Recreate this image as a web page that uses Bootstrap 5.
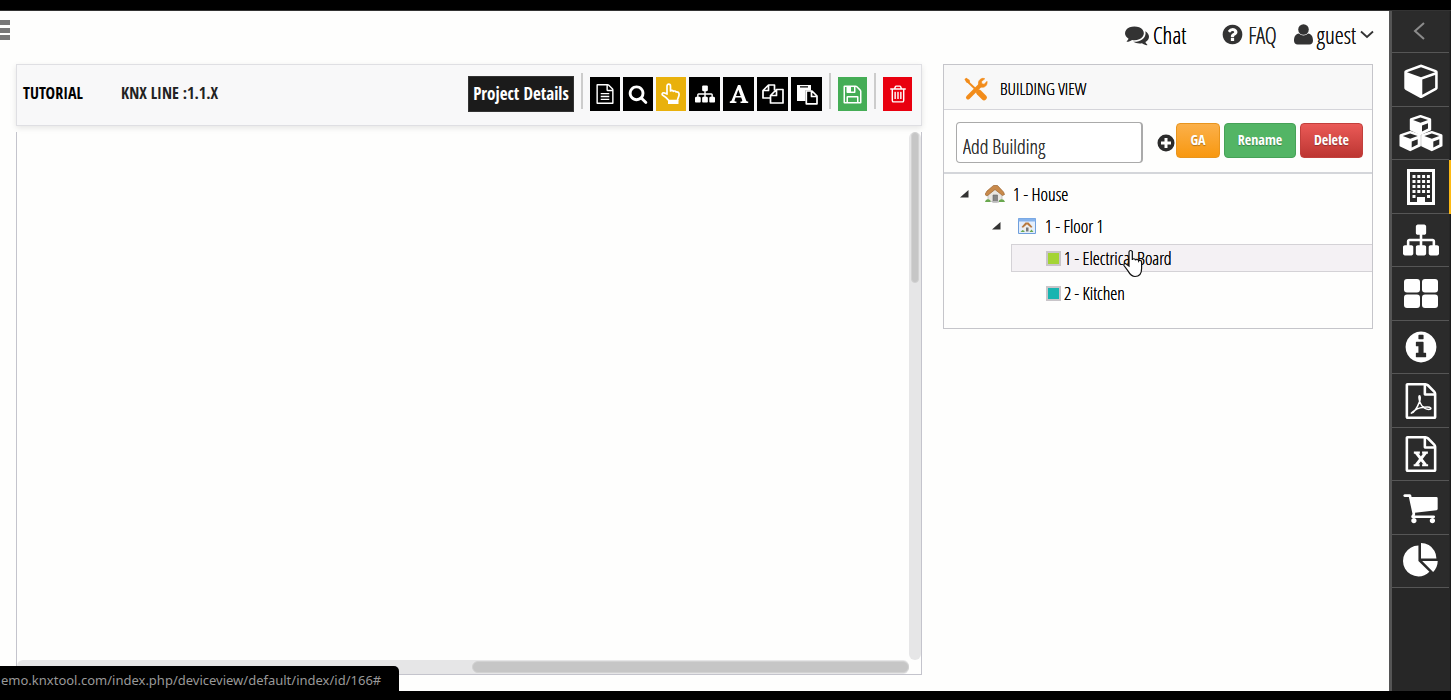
<!DOCTYPE html>
<html lang="en">
<head>
<meta charset="utf-8">
<meta name="viewport" content="width=device-width, initial-scale=1">
<title>KNX Tool - Building view</title>
<link href="https://cdn.jsdelivr.net/npm/bootstrap@5.3.0/dist/css/bootstrap.min.css" rel="stylesheet">
<style>
:root { --cond: "Open Sans Condensed", "Roboto Condensed", "Liberation Sans Narrow", "Liberation Sans", sans-serif; --cond-light: "Open Sans Condensed Light", "Roboto Condensed", "Liberation Sans", sans-serif; }
body { font-family: var(--cond); background: #fefefd; color: #222; font-size: 16px; line-height: 20px; }
svg { display: block; fill: currentColor; flex: none; }
.outline-icon { fill: none; }
a { color: inherit; text-decoration: none; }
.edge-top { height: 10px; background: #000; border-bottom: 1px solid #333; box-sizing: content-box; }
.edge-bottom { height: 9px; background: #000; }
.page-head, .side-title, .add-box, .node { font-family: var(--cond-light); text-shadow: 0 0 0 currentColor; }
.page-head { height: 53px; font-size: 23px; line-height: 28px; padding: 0 15px 6px 0; }
.burger { width: 11px; padding: 0; border: 0; background: none; color: #777; margin-bottom: 10px; }
.head-link { gap: 4px; }
.head-link svg { color: #333; }
.head-chat { margin-right: 35px; color: #000; }
.head-faq { margin-right: 17px; }
.head-btn { border: 0; background: none; padding: 0; color: #111; text-shadow: inherit; }
.work { padding: 0 16px 16px 16px; gap: 21px; }
.toolbar { height: 62px; background: #f8f8f9; border: 1px solid #dfdfe3; box-shadow: 0 2px 6px rgba(0,0,0,.1); padding: 0 9px 2px 6px; gap: 7px; margin-bottom: 6px; color: #000; }
.crumb { width: 91px; font-weight: 700; padding-bottom: 3px; }
.line-name { color: #222; }
.details-btn { height: 36px; width: 106px; background: #1b1b1b; color: #fff; border: 1px solid #333; font-weight: 700; font-size: 17px; padding: 0; white-space: nowrap; }
.sep { width: 2px; height: 36px; background: #ccc; margin-bottom: 6px; }
.tools { gap: 3px; }
.tool { height: 34px; width: 31px; padding: 0; border: 0; background: #000; color: #fff; display: flex; align-items: center; justify-content: center; }
.tool-slim { width: 30px; }
.tool-file { width: 29px; }
.tool-on { background: #e9b10c; }
.tool-save { background: #45ad56; }
.tool-del { background: #e9000f; }
.board { display: grid; grid-template: 1fr 14px / 1fr 12px; border: 1px solid #c4c4cc; border-top: 0; }
.rail { background: #e6e6e7; border-radius: 6px; }
.rail-y { padding: 0 2px; }
.rail-x { padding: 1px 0; }
.grip { background: #c6c6c6; border-radius: 6px; border: 1px solid #d2d2d2; }
.grip-y { height: 151px; }
.grip-x { height: 12px; width: 49%; }
.side-panel { flex: 0 0 430px; border: 1px solid #c5c5ca; align-self: flex-start; padding-bottom: 17px; }
.side-title { height: 45px; background: #f8f8f8; border-bottom: 1px solid #d5d5da; padding-left: 20px; padding-top: 4px; gap: 12px; font-size: 17px; color: #000; }
.side-form { height: 64px; padding: 3px 9px 0 12px; border-bottom: 2px solid #d4d6da; }
.add-box { width: 187px; height: 41px; border: 1px solid #aaa; border-right-width: 2px; border-radius: 4px; padding: 7px 6px 0; font-size: 20px; line-height: 26px; color: #333; background: #fff; }
.add-box::placeholder { color: #333; opacity: 1; }
.plus-btn { border: 0; background: none; padding: 0; color: #2b2b2b; margin-left: 14px; margin-right: 1px; margin-top: 1px; }
.act { height: 35px; padding: 0; border: 1px solid; border-radius: 4px; color: #fff; font-weight: 700; text-shadow: 0 1px 1px rgba(0,0,0,.3); margin-right: 4px; margin-bottom: 5px; font-size: 14px; }
.act-ga { width: 44px; background: linear-gradient(#fbb04a, #f89810); border-color: #e8951e; }
.act-ren { width: 72px; background: #53b565; border-color: #46a257; }
.act-del { width: 63px; background: linear-gradient(#ea5a57, #bd3632); border-color: #c2403c; margin-right: 0; }
.tree { list-style: none; margin: 0; padding: 0; }
.tree-top { padding-top: 6px; }
.node { height: 28px; margin-bottom: 4px; font-size: 18px; color: #000; }
.node-1 { padding-left: 16px; }
.node-2 { padding-left: 48px; }
.node-3 { margin-left: 67px; padding-left: 34px; border: 1px solid transparent; border-right: 0; }
.node-last { margin-top: 7px; }
.node-on { background: #f4f1f4; border-color: #d4d2d6; }
.swatch { width: 15px; height: 15px; border: 2px solid #c9c5c9; margin-right: 3px; }
.sw-lime { background: #a4d435; }
.sw-teal { background: #18b4b0; }
.hand { left: 111px; top: 4px; }
.dock { flex: 0 0 62px; background: #272727; border-left: 3px solid #555; color: #fff; border-right: 1px solid #1c1c1c; }
.dock a { display: flex; align-items: center; justify-content: center; border-bottom: 1px solid #565656; height: 54px; margin-right: 1px; background: #2b2b2b; }
.dock li:nth-child(odd) a { height: 53px; }
.dock li:first-child a { height: 42px; color: #8c8c8c; padding-right: 4px; padding-bottom: 2px; }
.dock .dock-on a { box-shadow: 3px 0 0 #fdb913; }
.status-url { left: 0; bottom: 0; height: 34px; background: #000; color: #999; border-top-right-radius: 5px; font: 13px/28px "Noto Sans", "Open Sans", sans-serif; white-space: nowrap; z-index: 5; padding: 0 10px 0 1px; min-width: 399px; }
</style>
</head>
<body>
<svg width="0" height="0" class="position-absolute" aria-hidden="true">
  <defs>
    <symbol id="i-sheet" viewBox="0 0 1792 1792"><path d="M1596 380q28 28 48 76t20 88v1152q0 40-28 68t-68 28h-1344q-40 0-68-28t-28-68v-1600q0-40 28-68t68-28h896q40 0 88 20t76 48zm-444-244v376h376q-10-29-22-41l-313-313q-12-12-41-22zm384 1528v-1024h-416q-40 0-68-28t-28-68v-416h-768v1536h1280z"/></symbol>
    <symbol id="i-map" viewBox="0 0 1792 1792"><path d="M1792 1248v320q0 40-28 68t-68 28h-320q-40 0-68-28t-28-68v-320q0-40 28-68t68-28h96v-192h-512v192h96q40 0 68 28t28 68v320q0 40-28 68t-68 28h-320q-40 0-68-28t-28-68v-320q0-40 28-68t68-28h96v-192h-512v192h96q40 0 68 28t28 68v320q0 40-28 68t-68 28h-320q-40 0-68-28t-28-68v-320q0-40 28-68t68-28h96v-192q0-52 38-90t90-38h512v-192h-96q-40 0-68-28t-28-68v-320q0-40 28-68t68-28h320q40 0 68 28t28 68v320q0 40-28 68t-68 28h-96v192h512q52 0 90 38t38 90v192h96q40 0 68 28t28 68z"/></symbol>
    <symbol id="i-cube" viewBox="-64 0 1792 1792"><path fill-rule="evenodd" d="M896 1629l640-349v-636l-640 233v752zm-64-865l698-254-698-254-698 254zm832-252v768q0 35-18 65t-49 47l-704 384q-28 16-61 16t-61-16l-704-384q-31-17-49-47t-18-65v-768q0-40 23-73t61-47l704-256q22-8 44-8t44 8l704 256q38 14 61 47t23 73z"/></symbol>
  </defs>
</svg>
<div class="d-flex flex-column min-vh-100">
  <div class="edge-top"></div>
  <div class="d-flex flex-grow-1">
    <div class="d-flex flex-column flex-grow-1">
      <header class="page-head d-flex align-items-center">
        <button class="burger" type="button" aria-label="Toggle menu"><svg width="11" height="22" viewBox="0 0 11 22"><path d="M0 1h10v5H0zM0 9h10v5H0zM0 16h10v5H0z"/></svg></button>
        <nav class="ms-auto d-flex align-items-center text-nowrap">
          <a href="#" class="head-link head-chat d-flex align-items-center"><svg width="24" height="24" viewBox="0 0 1792 1792"><path d="M1408 768q0 139-94 257t-256.5 186.5-353.5 68.5q-86 0-176-16-124 88-278 128-36 9-86 16h-3q-11 0-20.5-8t-11.5-21q-1-3-1-6.5t.5-6.5 2-6l2.5-5 3.5-5.5 4-5 4.5-5 4-4.5q5-6 23-25t26-29.5 22.5-29 25-38.5 20.5-44q-124-72-195-177t-71-224q0-139 94-257t256.5-186.5 353.5-68.5 353.5 68.5 256.5 186.5 94 257zm384 256q0 120-71 224.5t-195 176.5q10 24 20.5 44t25 38.5 22.5 29 26 29.5 23 25q1 1 4 4.5t4.5 5 4 5 3.5 5.5l2.5 5 2 6 .5 6.5-1 6.5q-3 14-13 22t-22 7q-50-7-86-16-154-40-278-128-90 16-176 16-271 0-472-132 58 4 88 4 161 0 309-45t264-129q125-92 192-212t67-254q0-77-23-152 129 71 204 178t75 230z"/></svg>Chat</a>
          <a href="#" class="head-link head-faq d-flex align-items-center"><svg width="23" height="23" viewBox="0 0 1792 1792"><path fill-rule="evenodd" d="M1024 1376v-192q0-14-9-23t-23-9h-192q-14 0-23 9t-9 23v192q0 14 9 23t23 9h192q14 0 23-9t9-23zm256-672q0-88-55.5-163t-138.5-116-170-41q-243 0-371 213-15 24 8 42l132 100q7 6 19 6 16 0 25-12 53-68 86-92 34-24 86-24 48 0 85.5 26t37.5 59q0 38-20 61t-68 45q-63 28-115.5 86.5t-52.5 125.5v36q0 14 9 23t23 9h192q14 0 23-9t9-23q0-19 21.5-49.5t54.5-49.5q32-18 49-28.5t46-35 44.5-48 28-60.5 12.5-81zm384 192q0 209-103 385.5t-279.5 279.5-385.5 103-385.5-103-279.5-279.5-103-385.5 103-385.5 279.5-279.5 385.5-103 385.5 103 279.5 279.5 103 385.5z"/></svg>FAQ</a>
          <button type="button" class="head-btn head-link d-flex align-items-center"><svg width="19" height="21" viewBox="0 0 19 21"><circle cx="9.500" cy="5.500" r="5.300"/><path d="M5 9.500c1.200 1.300 2.800 2 4.500 2s3.300-.7 4.500-2c3.500.2 5 3.500 5 7.300 0 2.300-1.500 3.700-3.700 3.700H3.700C1.500 20.500 0 19.100 0 16.800c0-3.800 1.500-7.100 5-7.300z"/></svg>guest<svg width="14" height="9" viewBox="0 0 14 9"><path d="M1 1.500l6 5.500 6-5.500" fill="none" stroke="currentColor" stroke-width="1.800"/></svg></button>
        </nav>
      </header>
      <main class="work d-flex flex-grow-1">
        <section class="d-flex flex-column flex-grow-1">
          <div class="toolbar d-flex align-items-center text-nowrap">
            <span class="crumb">TUTORIAL</span><span class="crumb line-name">KNX LINE :1.1.X</span>
            <button type="button" class="details-btn ms-auto">Project Details</button>
            <span class="sep"></span>
            <div class="tools d-flex">
              <button type="button" class="tool tool-slim" aria-label="Sheet"><svg width="20" height="22" viewBox="0 0 1792 1792"><use href="#i-sheet"/><path d="M512 800h768v128H512zM512 1056h768v128H512zM512 1312h768v128H512z"/></svg></button>
              <button type="button" class="tool tool-slim" aria-label="Search"><svg width="20" height="20" viewBox="0 0 1792 1792"><path d="M1216 832q0-185-131.500-316.500t-316.500-131.500-316.500 131.500-131.500 316.500 131.500 316.500 316.500 131.500 316.500-131.500 131.500-316.500zm512 832q0 52-38 90t-90 38q-54 0-90-38l-343-342q-179 124-399 124-143 0-273.500-55.500t-225-150-150-225-55.500-273.500 55.500-273.500 150-225 225-150 273.500-55.500 273.500 55.500 225 150 150 225 55.500 273.500q0 220-124 399l343 343q37 37 37 90z"/></svg></button>
              <button type="button" class="tool tool-slim tool-on" aria-label="Select"><svg width="20" height="22" viewBox="0 0 20 22"><path d="M6 11V3.200C6 .5 9.500.5 9.500 3.200V8c1-.9 2.400-.7 2.900.3 1-.6 2.200-.3 2.700.7 1.600-.5 3 .4 3 2.300 0 3-1.600 3.700-1.600 6.200H7.800C6 14.800 4 13.500 1.800 12.200.5 11.300 1.300 9.500 3 9.800c1 .2 2 .7 3 1.200z" fill="none" stroke="currentColor" stroke-width="1.700" stroke-linejoin="round"/><path d="M7 17h10.500v4H7z"/></svg></button>
              <button type="button" class="tool" aria-label="Topology"><svg width="20" height="20"><use href="#i-map"/></svg></button>
              <button type="button" class="tool" aria-label="Text"><svg width="20" height="20" viewBox="0 0 20 20"><path fill-rule="evenodd" d="M9 1h2.300l5.900 15.500c.3.800.9 1 2 1.100V19h-7.700v-1.400c1.600-.1 2-.3 1.600-1.500l-.9-2.500H6.500l-.8 2.300c-.5 1.300.1 1.600 1.700 1.700V19H.8v-1.400c1.100-.2 1.600-.5 2-1.500zM9.300 5.700L7 12h4.700z"/></svg></button>
              <button type="button" class="tool" aria-label="Copy"><svg class="outline-icon" width="22" height="20" viewBox="0 0 22 20" stroke="currentColor" stroke-width="1.700" stroke-linejoin="round"><path d="M8.500 14H1V6.500L6.500 1h6v5.500M6.500 1v5.500H1"/><path d="M14.500 5.500H21V19H8.500v-7.500zM14.500 5.500v6h-6"/></svg></button>
              <button type="button" class="tool" aria-label="Paste"><svg width="22" height="21" viewBox="0 0 22 21"><path fill-rule="evenodd" d="M1 1h14v5.500H9.500V17H1zM4 2.200v1.300h8V2.200z"/><path d="M10.300 7h5.700l5 5v7.800H10.300zM15.500 7v5.500H21" fill="none" stroke="currentColor" stroke-width="1.700" stroke-linejoin="round"/></svg></button>
            </div>
            <span class="sep"></span>
            <button type="button" class="tool tool-file tool-save" aria-label="Save"><svg width="21" height="21" viewBox="0 0 1792 1792"><path fill-rule="evenodd" d="M512 1536h768v-384h-768v384zm896 0h128v-896q0-14-10-38.500t-20-34.500l-281-281q-10-10-34-20t-39-10v416q0 40-28 68t-68 28h-576q-40 0-68-28t-28-68v-416h-128v1280h128v-416q0-40 28-68t68-28h832q40 0 68 28t28 68v416zm-384-928v-320q0-13-9.500-22.500t-22.500-9.500h-192q-13 0-22.500 9.500t-9.500 22.500v320q0 13 9.500 22.500t22.500 9.500h192q13 0 22.500-9.500t9.500-22.500zm640 32v928q0 40-28 68t-68 28h-1344q-40 0-68-28t-28-68v-1344q0-40 28-68t68-28h928q40 0 88 20t76 48l280 280q28 28 48 76t20 88z"/></svg></button>
            <span class="sep"></span>
            <button type="button" class="tool tool-file tool-del" aria-label="Delete item"><svg width="20" height="20" viewBox="0 0 1792 1792"><path fill-rule="evenodd" d="M704 736v576q0 14-9 23t-23 9h-64q-14 0-23-9t-9-23v-576q0-14 9-23t23-9h64q14 0 23 9t9 23zm256 0v576q0 14-9 23t-23 9h-64q-14 0-23-9t-9-23v-576q0-14 9-23t23-9h64q14 0 23 9t9 23zm256 0v576q0 14-9 23t-23 9h-64q-14 0-23-9t-9-23v-576q0-14 9-23t23-9h64q14 0 23 9t9 23zm128 724v-948h-896v948q0 22 7 40.500t14.500 27 10.500 8.500h832q3 0 10.500-8.500t14.500-27 7-40.500zm-672-1076h448l-48-117q-7-9-17-11h-317q-10 2-17 11zm928 32v64q0 14-9 23t-23 9h-96v948q0 83-47 143.500t-113 60.500h-832q-66 0-113-58.500t-47-141.500v-952h-96q-14 0-23-9t-9-23v-64q0-14 9-23t23-9h309l70-167q15-37 54-63t79-26h320q40 0 79 26t54 63l70 167h309q14 0 23 9t9 23z"/></svg></button>
          </div>
          <div class="board flex-grow-1">
            <div></div>
            <div class="rail rail-y"><div class="grip grip-y"></div></div>
            <div class="rail rail-x d-flex justify-content-end"><div class="grip grip-x"></div></div>
          </div>
        </section>
        <aside class="side-panel">
          <div class="side-title d-flex align-items-center"><svg class="outline-icon" width="24" height="24" viewBox="0 0 24 24" stroke="#f28c1b"><path d="M4 20.500L16 8.500" stroke-width="4" stroke-linecap="round"/><path d="M20.800 1.800L17.500 4.500l.4 2.300 2.300.4L23 4.300c.8 4-2.500 7-6.300 5.700-3-1.200-3.300-6.500.6-8.300 1-.5 2.300-.5 3.500.1z" fill="#f28c1b" stroke="#f28c1b" stroke-width=".6"/><path d="M3 4l10 9.500" stroke-width="2"/><path d="M.5 2.200L2.200.8 5.600 3 6 5.200 4.700 6.200 2.400 5.500z" fill="#f28c1b" stroke="none"/><path d="M15 15.500l5 5" stroke-width="5.500" stroke-linecap="round"/></svg>BUILDING VIEW</div>
          <form class="side-form d-flex align-items-center">
            <input class="add-box" type="text" placeholder="Add Building" aria-label="Add Building">
            <button type="button" class="plus-btn" aria-label="Add"><svg width="18" height="18" viewBox="0 0 18 18"><path fill-rule="evenodd" d="M9 .5a8.500 8.500 0 1 1 0 17 8.500 8.500 0 0 1 0-17zM7.500 4v3.500H4v3h3.500V14h3v-3.500H14v-3h-3.500V4z"/></svg></button>
            <button type="button" class="act act-ga">GA</button>
            <button type="button" class="act act-ren">Rename</button>
            <button type="button" class="act act-del">Delete</button>
          </form>
          <ul class="tree tree-top">
            <li>
              <div class="node node-1 d-flex align-items-center"><svg class="me-3" width="9" height="8" viewBox="0 0 9 8"><path d="M8.500 0v7.500H0z" fill="#333"/></svg>
                <svg class="me-2" width="20" height="18" viewBox="0 0 20 18"><path d="M3 8l7-6.500L17 8v8.500H3z" fill="#e9e6e1" stroke="#aaa" stroke-width=".6"/><path d="M8 10h4.500v7H8z" fill="#858585" stroke="#666" stroke-width=".6"/><path d="M0 9.500L2 6l6.500-5.500h4L18.500 7l1 2.500-2 1L10 4.500 2 11z" fill="#c98a4b" stroke="#9b6430" stroke-width=".7"/><path d="M0 17c.5-2.500 3-4 5.500-1.500V17zM13.500 17c.5-3 5-4 6.500 0z" fill="#6aa84f"/><path d="M7 16h7v1.500H7z" fill="#bbb"/></svg>1 - House</div>
              <ul class="tree">
                <li>
                  <div class="node node-2 d-flex align-items-center"><svg class="me-3" width="9" height="8" viewBox="0 0 9 8"><path d="M8.500 0v7.500H0z" fill="#333"/></svg>
                    <svg class="me-2" width="20" height="16" viewBox="0 0 20 16"><path d="M1.500.5h17v15h-17z" fill="#e4eefb" stroke="#6f9fdc"/><path d="M1.500.5h17v3h-17z" fill="#86b3ec"/><path d="M6 8l4-3.500L14 8v5.500H6z" fill="#eee"/><path d="M9 9.500h2.500v4H9z" fill="#777"/><path d="M4.500 9l4-4.500h3l4 4.500-1.500.8L10 6.200 6 9.800z" fill="#b87a40"/><path d="M3.500 14l2-2 2 1v1zM12.500 14l2-2.500 2 2.500z" fill="#6aa84f"/></svg>1 - Floor 1</div>
                  <ul class="tree">
                    <li class="node node-3 node-on d-flex align-items-center position-relative"><span class="swatch sw-lime"></span>1 - Electrical Board
                      <svg class="hand position-absolute" width="20" height="29" viewBox="0 0 20 29"><path d="M6 17V3.500C6 .8 9.300.8 9.300 3.500V11c.3-1.800 2.900-1.600 3.100.3.600-1.500 3-1.200 3.200.7.700-1.200 3-.8 3 1.200v6.300c0 5-2.600 8-6.600 8-3.500 0-5.200-2.300-6.700-5.100L1 16.500c-.7-1.700 1.300-2.500 2.500-1.300z" fill="#fff" stroke="#111" stroke-width="1.200"/></svg></li>
                    <li class="node node-3 node-last d-flex align-items-center"><span class="swatch sw-teal"></span>2 - Kitchen</li>
                  </ul>
                </li>
              </ul>
            </li>
          </ul>
        </aside>
      </main>
    </div>
    <nav class="dock">
      <ul class="list-unstyled m-0">
        <li><a href="#" aria-label="Collapse"><svg width="12" height="18" viewBox="0 0 12 18"><path d="M11 1L2 9l9 8" fill="none" stroke="currentColor" stroke-width="2"/></svg></a></li>
        <li><a href="#" aria-label="Device"><svg width="36" height="36"><use href="#i-cube"/></svg></a></li>
        <li><a href="#" aria-label="Devices"><svg width="44" height="37" viewBox="0 0 44 37"><g stroke="currentColor" stroke-width="2.400" stroke-linejoin="round"><g id="box"><path d="M12 4.500l9.500-3.300 9.500 3.300v10L21.500 19 12 14.500z"/><path d="M14 5l7.500-2.600L29 5l-7.500 2.800z" fill="#2b2b2b" stroke="none"/><path d="M23 10.500l6-2.300v5.400l-6 2.900z" fill="#2b2b2b" stroke="none"/></g></g><g stroke="currentColor" stroke-width="2.400" stroke-linejoin="round"><use href="#box" x="-10.300" y="16"/><use href="#box" x="11.300" y="16"/></g></svg></a></li>
        <li class="dock-on"><a href="#" aria-label="Building"><svg width="30" height="36" viewBox="0 0 30 36"><path fill-rule="evenodd" d="M1 0h28v36H1zM4 3v30h7v-5h8v5h7V3z"/><path d="M6.500 7.500h17.500M6.500 12.500h17.500M6.500 17.500h17.500M6.500 22.500h17.500" stroke="currentColor" stroke-width="3" stroke-dasharray="3 1.800" fill="none"/><path d="M6.500 26h3v3h-3zM21 26h3v3h-3z"/></svg></a></li>
        <li><a href="#" aria-label="Topology"><svg width="36" height="36"><use href="#i-map"/></svg></a></li>
        <li><a href="#" aria-label="Rooms"><svg width="34" height="29" viewBox="0 0 34 29"><rect width="16" height="13.500" rx="3"/><rect x="18" width="16" height="13.500" rx="3"/><rect y="15.500" width="16" height="13.500" rx="3"/><rect x="18" y="15.500" width="16" height="13.500" rx="3"/></svg></a></li>
        <li><a href="#" aria-label="Information"><svg width="36" height="36" viewBox="0 0 1792 1792"><path fill-rule="evenodd" d="M1152 1376v-160q0-14-9-23t-23-9h-96v-512q0-14-9-23t-23-9h-320q-14 0-23 9t-9 23v160q0 14 9 23t23 9h96v320h-96q-14 0-23 9t-9 23v160q0 14 9 23t23 9h448q14 0 23-9t9-23zm-128-896v-160q0-14-9-23t-23-9h-192q-14 0-23 9t-9 23v160q0 14 9 23t23 9h192q14 0 23-9t9-23zm640 416q0 209-103 385.500t-279.500 279.500-385.500 103-385.500-103-279.500-279.500-103-385.500 103-385.500 279.500-279.500 385.500-103 385.500 103 279.500 279.500 103 385.500z"/></svg></a></li>
        <li><a href="#" aria-label="PDF export"><svg width="36" height="36" viewBox="0 0 1792 1792"><use href="#i-sheet"/><path d="M420 1500c120-30 300-310 400-560 60-170 40-300 0-300s-40 150 30 330c110 280 330 360 480 340 110-20 60-110-120-110-250 0-520 90-640 170-110 70-170 140-150 130z" fill="none" stroke="currentColor" stroke-width="75"/></svg></a></li>
        <li><a href="#" aria-label="Excel export"><svg width="36" height="36" viewBox="0 0 1792 1792"><use href="#i-sheet"/><path d="M650 830l480 620M1130 830l-480 620" fill="none" stroke="currentColor" stroke-width="150"/><path d="M540 770h300v110H540zM950 770h290v110H950zM530 1400h300v110H530zM950 1400h300v110H950z"/></svg></a></li>
        <li><a href="#" aria-label="Cart"><svg width="37" height="37" viewBox="0 0 1792 1792"><path d="M704 1536q0 52-38 90t-90 38-90-38-38-90 38-90 90-38 90 38 38 90zm896 0q0 52-38 90t-90 38-90-38-38-90 38-90 90-38 90 38 38 90zm128-1088v512q0 24-16.500 42.500t-40.500 21.500l-1044 122q13 60 13 70 0 16-24 64h920q26 0 45 19t19 45-19 45-45 19h-1024q-26 0-45-19t-19-45q0-11 8-31.500t16-36 21.500-40 15.500-29.500l-177-823h-204q-26 0-45-19t-19-45 19-45 45-19h256q16 0 28.500 6.500t19.500 15.500 13 24.500 8 26 5.500 29.500 4.500 26h1201q26 0 45 19t19 45z"/></svg></a></li>
        <li><a href="#" aria-label="Reports"><svg width="36" height="36" viewBox="0 0 1792 1792"><path d="M768 890l546 546q-106 108-247.500 168t-298.500 60q-209 0-385.500-103t-279.500-279.500-103-385.500 103-385.500 279.500-279.500 385.500-103v762zm187 6h773q0 157-60 298.500t-168 247.500zm709-128h-768v-768q209 0 385.500 103t279.500 279.500 103 385.500z"/></svg></a></li>
      </ul>
    </nav>
  </div>
  <div class="edge-bottom"></div>
</div>
<div class="status-url position-fixed">emo.knxtool.com/index.php/deviceview/default/index/id/166#</div>
<script src="https://cdn.jsdelivr.net/npm/bootstrap@5.3.0/dist/js/bootstrap.bundle.min.js"></script>
</body>
</html>
